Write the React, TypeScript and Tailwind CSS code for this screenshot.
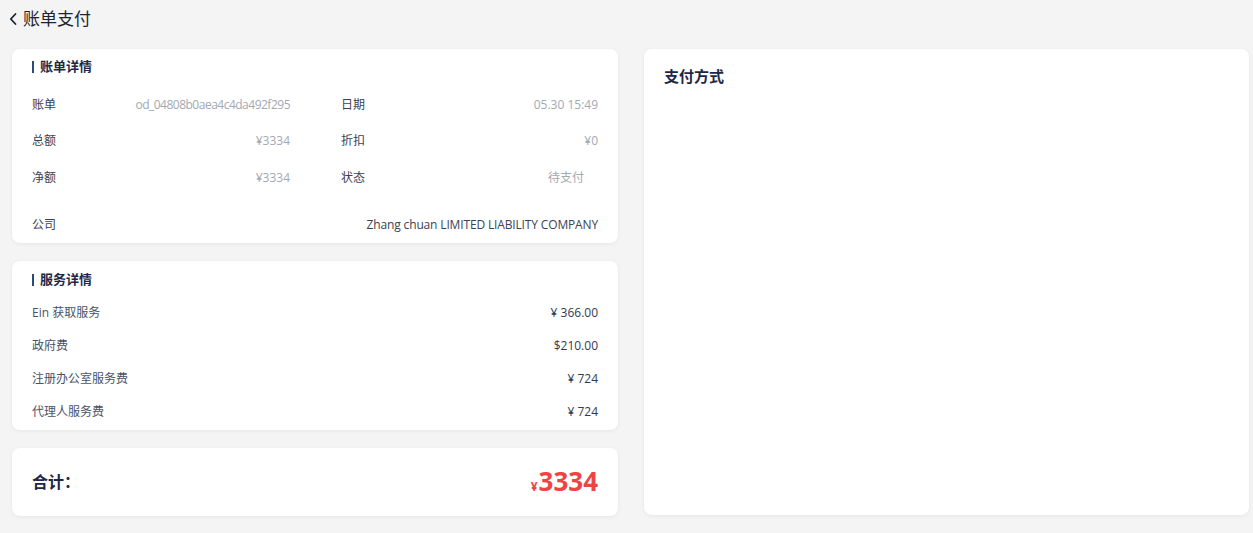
import React from "react";

const font = { fontFamily: '"Open Sans", "Noto Sans CJK SC", sans-serif' };

function Row2({ l1, v1, l2, v2, h, v1c = "" }: { l1: string; v1: string; l2: string; v2: string; h: string; v1c?: string }) {
  return (
    <div className={`grid grid-cols-[258px_1fr] ${h} items-center`}>
      <div className="flex items-center justify-between pr-0">
        <span className="text-[12px] text-[#3b4255]">{l1}</span>
        <span className={`text-[12px] text-[#a3a8b3] ${v1c}`}>{v1}</span>
      </div>
      <div className="flex items-center justify-between pl-[51px]">
        <span className="text-[12px] text-[#3b4255]">{l2}</span>
        <span className="text-[12px] text-[#a3a8b3]">{v2}</span>
      </div>
    </div>
  );
}

function Title({ children }: { children: React.ReactNode }) {
  return (
    <div className="flex items-center gap-[6px] text-[13px] font-bold text-[#1d2847]">
      <span className="w-[2px] h-[12px] bg-[#2a4a7c]" />
      <span>{children}</span>
    </div>
  );
}

function SRow({ l, v }: { l: string; v: string }) {
  return (
    <div className="flex items-center justify-between h-[33px]">
      <span className="text-[12px] text-[#4b5263]">{l}</span>
      <span className="text-[12px] text-[#2f3a52]">{v}</span>
    </div>
  );
}

export default function App() {
  return (
    <div style={font} className="w-[1253px] h-[533px] bg-[#f4f4f4] overflow-hidden">
      <div className="h-[37px] flex items-center pl-[8px] gap-[5px] text-[#1f2330]">
        <svg width="10" height="14" viewBox="0 0 10 14" fill="none">
          <path d="M7.5 2 L2.8 7 L7.5 12" stroke="#1f2330" strokeWidth="1.8" strokeLinecap="round" strokeLinejoin="round" />
        </svg>
        <span className="text-[17px]">账单支付</span>
      </div>
      <div className="flex gap-[26px] pl-[12px] pr-[4px] pt-[12px]">
        <div className="w-[606px] flex flex-col gap-[18px]">
          <div className="bg-white rounded-[8px] shadow-[0_1px_4px_rgba(0,0,0,0.06)] h-[194px] px-[20px] pt-[10px]">
            <div className="h-[16px] flex items-center"><Title>账单详情</Title></div>
            <div className="pt-[12px]">
              <Row2 h="h-[36px]" l1="账单" v1="od_04808b0aea4c4da492f295" v1c="tracking-[-0.5px]" l2="日期" v2="05.30 15:49" />
              <Row2 h="h-[36px]" l1="总额" v1="¥3334" l2="折扣" v2="¥0" />
              <div className="grid grid-cols-[258px_1fr] h-[38px] items-center">
                <div className="flex items-center justify-between">
                  <span className="text-[12px] text-[#3b4255]">净额</span>
                  <span className="text-[12px] text-[#a3a8b3]">¥3334</span>
                </div>
                <div className="flex items-center justify-between pl-[51px]">
                  <span className="text-[12px] text-[#3b4255]">状态</span>
                  <span className="text-[12px] text-[#a3a8b3] pr-[14px]">待支付</span>
                </div>
              </div>
              <div className="flex items-center justify-between h-[56px]">
                <span className="text-[12px] text-[#3b4255]">公司</span>
                <span className="text-[12px] text-[#3b4255] tracking-[-0.15px]">Zhang chuan LIMITED LIABILITY COMPANY</span>
              </div>
            </div>
          </div>
          <div className="bg-white rounded-[8px] shadow-[0_1px_4px_rgba(0,0,0,0.06)] h-[169px] px-[20px] pt-[11px]">
            <div className="h-[16px] flex items-center"><Title>服务详情</Title></div>
            <div className="pt-[8px]">
              <SRow l="Ein 获取服务" v="¥ 366.00" />
              <SRow l="政府费" v="$210.00" />
              <SRow l="注册办公室服务费" v="¥ 724" />
              <SRow l="代理人服务费" v="¥ 724" />
            </div>
          </div>
          <div className="bg-white rounded-[8px] shadow-[0_1px_4px_rgba(0,0,0,0.06)] h-[68px] px-[20px] flex items-center justify-between">
            <span className="text-[16px] font-bold text-[#1d2847]">合计：</span>
            <span className="text-[#ef4444] font-bold flex items-baseline">
              <span className="text-[12px] mr-[1px]">¥</span>
              <span className="text-[26px] leading-none">3334</span>
            </span>
          </div>
        </div>
        <div className="flex-1 h-[466px] bg-white rounded-[8px] shadow-[0_1px_4px_rgba(0,0,0,0.06)] px-[20px] pt-[16px]">
          <div className="text-[15px] font-bold text-[#1d2847]">支付方式</div>
        </div>
      </div>
    </div>
  );
}
